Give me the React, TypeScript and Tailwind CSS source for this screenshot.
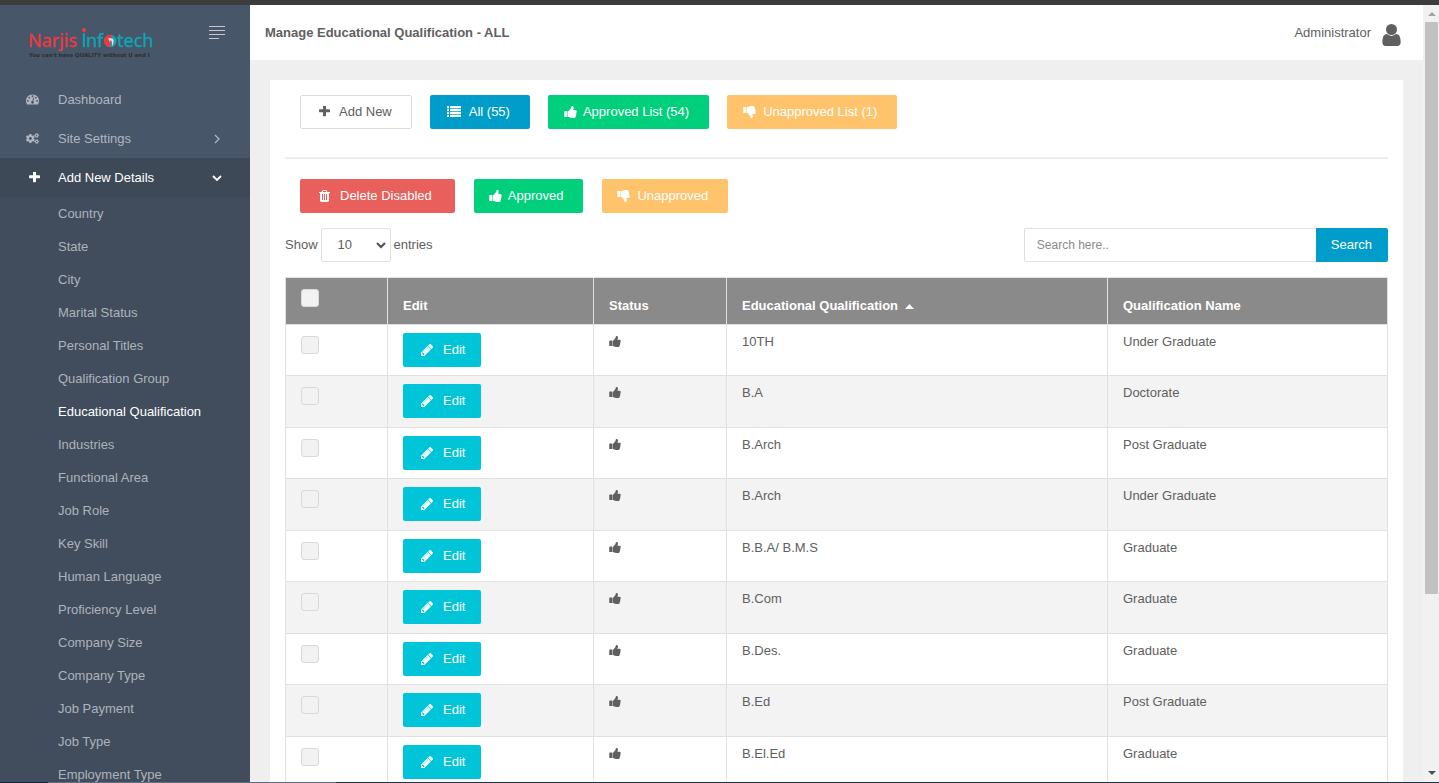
import type { ReactNode } from "react";
import { FaCogs } from "react-icons/fa";

type GlyphProps = { w: number; top: number; h: number; d: string; className?: string; flip?: boolean };

function Glyph({ w, top, h, d, className, flip }: GlyphProps) {
  return (
    <svg aria-hidden="true" viewBox={`0 ${flip ? top - h : -top} ${w} ${h}`} className={className} fill="currentColor">
      <path d={d} transform={flip ? undefined : "scale(1,-1)"} />
    </svg>
  );
}

const THUMB =
  "M256 320q0 -26 -19 -45t-45 -19q-27 0 -45.5 19t-18.5 45q0 27 18.5 45.5t45.5 18.5q26 0 45 -18.5t19 -45.5zM416 704v-640q0 -26 -19 -45t-45 -19h-288q-26 0 -45 19t-19 45v640q0 26 19 45t45 19h288q26 0 45 -19t19 -45zM1600 704q0 -86 -55 -149q15 -44 15 -76q3 -76 -43 -137q17 -56 0 -117q-15 -57 -54 -94q9 -112 -49 -181q-64 -76 -197 -78h-36h-76h-17q-66 0 -144 15.5t-121.5 29t-120.5 39.5q-123 43 -158 44q-26 1 -45 19.5t-19 44.5v641q0 25 18 43.5t43 20.5q24 2 76 59t101 121q68 87 101 120q18 18 31 48t17.5 48.5t13.5 60.5q7 39 12.5 61t19.5 52t34 50q19 19 45 19q46 0 82.5 -10.5t60 -26t40 -40.5t24 -45t12 -50t5 -45t0.5 -39q0 -38 -9.5 -76t-19 -60t-27.5 -56q-3 -6 -10 -18t-11 -22t-8 -24h277q78 0 135 -57t57 -135z";
const PLUS =
  "M1408 800v-192q0 -40 -28 -68t-68 -28h-416v-416q0 -40 -28 -68t-68 -28h-192q-40 0 -68 28t-28 68v416h-416q-40 0 -68 28t-28 68v192q0 40 28 68t68 28h416v416q0 40 28 68t68 28h192q40 0 68 -28t28 -68v-416h416q40 0 68 -28t28 -68z";
const USER =
  "M1280 137q0 -109 -62.5 -187t-150.5 -78h-854q-88 0 -150.5 78t-62.5 187q0 85 8.5 160.5t31.5 152t58.5 131t94 89t134.5 34.5q131 -128 313 -128t313 128q76 0 134.5 -34.5t94 -89t58.5 -131t31.5 -152t8.5 -160.5zM1024 1024q0 -159 -112.5 -271.5t-271.5 -112.5t-271.5 112.5t-112.5 271.5t112.5 271.5t271.5 112.5t271.5 -112.5t112.5 -271.5z";
const PENCIL =
  "M363 0l91 91l-235 235l-91 -91v-107h128v-128h107zM886 928q0 22 -22 22q-10 0 -17 -7l-542 -542q-7 -7 -7 -17q0 -22 22 -22q10 0 17 7l542 542q7 7 7 17zM832 1120l416 -416l-832 -832h-416v416zM1515 1024q0 -53 -37 -90l-166 -166l-416 416l166 165q36 38 90 38q53 0 91 -38l235 -234q37 -39 37 -91z";
const TRASH =
  "M512 160v704q0 14 -9 23t-23 9h-64q-14 0 -23 -9t-9 -23v-704q0 -14 9 -23t23 -9h64q14 0 23 9t9 23zM768 160v704q0 14 -9 23t-23 9h-64q-14 0 -23 -9t-9 -23v-704q0 -14 9 -23t23 -9h64q14 0 23 9t9 23zM1024 160v704q0 14 -9 23t-23 9h-64q-14 0 -23 -9t-9 -23v-704q0 -14 9 -23t23 -9h64q14 0 23 9t9 23zM480 1152h448l-48 117q-7 9 -17 11h-317q-10 -2 -17 -11zM1408 1120v-64q0 -14 -9 -23t-23 -9h-96v-948q0 -83 -47 -143.5t-113 -60.5h-832q-66 0 -113 58.5t-47 141.5v952h-96q-14 0 -23 9t-9 23v64q0 14 9 23t23 9h309l70 167q15 37 54 63t79 26h320q40 0 79 -26t54 -63l70 -167h309q14 0 23 -9t9 -23z";
const GAUGE =
  "M384 384q0 53 -37.5 90.5t-90.5 37.5t-90.5 -37.5t-37.5 -90.5t37.5 -90.5t90.5 -37.5t90.5 37.5t37.5 90.5zM576 832q0 53 -37.5 90.5t-90.5 37.5t-90.5 -37.5t-37.5 -90.5t37.5 -90.5t90.5 -37.5t90.5 37.5t37.5 90.5zM1004 351l101 382q6 26 -7.5 48.5t-38.5 29.5t-48 -6.5t-30 -39.5l-101 -382q-60 -5 -107 -43.5t-63 -98.5q-20 -77 20 -146t117 -89t146 20t89 117q16 60 -6 117t-72 91zM1664 384q0 53 -37.5 90.5t-90.5 37.5t-90.5 -37.5t-37.5 -90.5t37.5 -90.5t90.5 -37.5t90.5 37.5t37.5 90.5zM1024 1024q0 53 -37.5 90.5t-90.5 37.5t-90.5 -37.5t-37.5 -90.5t37.5 -90.5t90.5 -37.5t90.5 37.5t37.5 90.5zM1472 832q0 53 -37.5 90.5t-90.5 37.5t-90.5 -37.5t-37.5 -90.5t37.5 -90.5t90.5 -37.5t90.5 37.5t37.5 90.5zM1792 384q0 -261 -141 -483q-19 -29 -54 -29h-1402q-35 0 -54 29q-141 221 -141 483q0 182 71 348t191 286t286 191t348 71t348 -71t286 -191t191 -286t71 -348z";

const PlusIcon = () => <Glyph w={1408} top={1312} h={1408} d={PLUS} className="size-[11px]" />;
const ThumbUp = ({ className }: { className: string }) => (
  <Glyph w={1600} top={1408} h={1536} d={THUMB} className={className} />
);
const ThumbDown = () => <Glyph w={1600} top={1408} h={1536} d={THUMB} flip className="h-3 w-[13px]" />;
const TrashIcon = () => <Glyph w={1408} top={1408} h={1536} d={TRASH} className="h-3 w-[11px]" />;
const PencilIcon = () => <Glyph w={1515} top={1387} h={1515} d={PENCIL} className="size-3" />;
const ListIcon = () => (
  <svg aria-hidden="true" viewBox="0 0 28 22" className="h-[11px] w-[14px]" fill="currentColor">
    {[0, 6, 12, 18].map((y) => (
      <g key={y}>
        <rect x="0" y={y} width="4" height="4.6" rx="0.5" />
        <rect x="6" y={y} width="22" height="4.6" rx="0.5" />
      </g>
    ))}
  </svg>
);

function ActionButton({ tone, icon, children }: { tone: string; icon: ReactNode; children: ReactNode }) {
  return (
    <button type="button" className={`flex h-[34px] items-center rounded-[2px] pb-px whitespace-nowrap ${tone}`}>
      {icon}
      <span>{children}</span>
    </button>
  );
}

function Logo() {
  return (
    <svg viewBox="0 0 130 34" className="h-[34px] w-[130px]" role="img" aria-label="Narjis Infotech">
      <g fontFamily="'Noto Sans', sans-serif" fontSize="18" strokeWidth="0.3">
        <text x="0" y="21" fill="#ee3a3f" stroke="#ee3a3f">Narjis</text>
        <g fill="#0da7b4" stroke="#0da7b4">
          <rect x="55" y="7.5" width="1.8" height="13.5" />
          <text x="58" y="21">nf</text>
          <text x="89" y="21">tech</text>
        </g>
      </g>
      <circle cx="56" cy="4" r="2" fill="#ee3a3f" />
      <circle cx="82.3" cy="15" r="6.2" fill="#0da7b4" />
      <path d="M84 9.1a6.2 6.2 0 1 0 -1.8 12.1z" fill="#ee3a3f" />
      <path d="M79.8 12.2h3.2q2.6 0 2.6 2.8q0 3.2-1.6 5.6q.3-3.4-.2-5.2q-.3-1.2-1.4-1.2l-.4 2.2l-1-2.6z" fill="#f3dfe2" />
      <text x="1" y="31" fontFamily="'DejaVu Sans', sans-serif" fontWeight="bold" fontSize="5.4" fill="#2b2f38">
        You can't have QUALITY without U and I
      </text>
    </svg>
  );
}

const SUBMENU = [
  "Country", "State", "City", "Marital Status", "Personal Titles", "Qualification Group",
  "Educational Qualification", "Industries", "Functional Area", "Job Role", "Key Skill",
  "Human Language", "Proficiency Level", "Company Size", "Company Type", "Job Payment",
  "Job Type", "Employment Type",
];

const ROWS = [
  ["10TH", "Under Graduate"],
  ["B.A", "Doctorate"],
  ["B.Arch", "Post Graduate"],
  ["B.Arch", "Under Graduate"],
  ["B.B.A/ B.M.S", "Graduate"],
  ["B.Com", "Graduate"],
  ["B.Des.", "Graduate"],
  ["B.Ed", "Post Graduate"],
  ["B.El.Ed", "Graduate"],
];

function NavItem({ icon, label, arrow, active }: { icon: ReactNode; label: string; arrow?: string; active?: boolean }) {
  return (
    <a
      href="#"
      className={`flex h-[39px] items-center pr-7 pl-[26px] ${active ? "bg-[#3e4958] text-white" : "text-[#b1b6be]"}`}
    >
      <span className="flex w-8 items-center">{icon}</span>
      <span className="grow">{label}</span>
      {arrow && (
        <svg aria-hidden="true" viewBox="0 0 10 10" className="size-[10px]" fill="none" stroke="currentColor" strokeWidth={active ? 1.8 : 1.3}>
          <path d={arrow} />
        </svg>
      )}
    </a>
  );
}

function Sidebar() {
  return (
    <aside className="w-[250px] shrink-0 overflow-hidden bg-[#475669]">
      <div className="flex h-[75px] items-start justify-between pt-[21px] pr-[25px] pl-[28px]">
        <Logo />
        <button type="button" aria-label="Toggle menu" className="text-[#c4c8ce]">
          <svg viewBox="0 0 16 14" className="h-[14px] w-4" fill="currentColor">
            <path d="M0 0h16v1H0zM0 4h16v1H0zM0 8h16v1H0zM0 12h10v1H0z" />
          </svg>
        </button>
      </div>
      <nav>
        <NavItem
          icon={<Glyph w={1792} top={1280} h={1408} d={GAUGE} className="h-[11px] w-[13px]" />}
          label="Dashboard"
        />
        <NavItem icon={<FaCogs className="size-[13px]" />} label="Site Settings" arrow="M3 1l4 4l-4 4" />
        <NavItem
          icon={<span className="pl-[3px]"><PlusIcon /></span>}
          label="Add New Details"
          arrow="M1 3l4 4l4 -4"
          active
        />
        <ul className="bg-[#414d5d]">
          {SUBMENU.map((item) => (
            <li key={item}>
              <a
                href="#"
                className={`flex h-[33px] items-center pl-[58px] ${item === "Educational Qualification" ? "text-white" : "text-[#aeb3bb]"}`}
              >
                {item}
              </a>
            </li>
          ))}
        </ul>
      </nav>
    </aside>
  );
}

const CHECKBOX = "block size-[18px] appearance-none rounded-[3px] border border-[#d9d9d9] bg-[#f2f2f2]";
const CELL = "border border-[#e1e1e1] px-[15px] align-top";

function DataTable() {
  return (
    <table className="mt-[15px] w-full table-fixed border-collapse text-left leading-[18px]">
      <colgroup>
        <col className="w-[102px]" />
        <col className="w-[206px]" />
        <col className="w-[133px]" />
        <col className="w-[381px]" />
        <col />
      </colgroup>
      <thead>
        <tr className="h-[47px] bg-[#8a8a8a] text-white">
          <th className={`${CELL} pt-[11px]`}>
            <input type="checkbox" aria-label="Select all" className={CHECKBOX} />
          </th>
          <th className={`${CELL} pt-[19px]`}>Edit</th>
          <th className={`${CELL} pt-[19px]`}>Status</th>
          <th className={`${CELL} pt-[19px]`}>
            <span className="flex items-center gap-[7px]">
              Educational Qualification
              <svg aria-hidden="true" viewBox="0 0 9 5" className="h-[5px] w-[9px]" fill="currentColor">
                <path d="M4.5 0L9 5H0z" />
              </svg>
            </span>
          </th>
          <th className={`${CELL} pt-[19px]`}>Qualification Name</th>
        </tr>
      </thead>
      <tbody>
        {ROWS.map(([name, group], i) => (
          <tr key={i} className={i % 2 ? "h-[52px] bg-[#f3f3f3]" : "h-[51px] bg-white"}>
            <td className={`${CELL} pt-[11px]`}>
              <input type="checkbox" aria-label={`Select ${name}`} className={CHECKBOX} />
            </td>
            <td className={`${CELL} pt-2`}>
              <ActionButton tone="bg-[#00c5d9] text-white gap-[10px] pl-[18px] pr-4" icon={<PencilIcon />}>
                Edit
              </ActionButton>
            </td>
            <td className={`${CELL} pt-[11px]`}>
              <ThumbUp className="h-[11px] w-3" />
            </td>
            <td className={`${CELL} pt-2`}>{name}</td>
            <td className={`${CELL} pt-2`}>{group}</td>
          </tr>
        ))}
      </tbody>
    </table>
  );
}

function Scrollbar() {
  return (
    <div aria-hidden="true" className="flex w-4 shrink-0 flex-col items-center bg-[#f1f1f1]">
      <svg viewBox="0 0 17 17" className="size-[17px] shrink-0">
        <path d="M5 11l4 -4l4 4z" fill="#a3a3a3" />
      </svg>
      <div className="w-[13px] grow-[10] bg-[#c1c1c1]" />
      <div className="grow-[3]" />
      <svg viewBox="0 0 17 17" className="size-[17px] shrink-0">
        <path d="M5 6l4 4l4 -4z" fill="#505050" />
      </svg>
    </div>
  );
}

export default function App() {
  return (
    <div className="flex h-screen flex-col overflow-hidden bg-[#efefef] font-['Liberation_Sans',Arial,sans-serif] text-[13px] text-[#606060]">
      <div className="h-[5px] shrink-0 bg-[#3c3c3c]" />
      <div className="flex min-h-0 grow">
        <Sidebar />
        <div className="flex min-w-0 grow flex-col overflow-hidden">
          <header className="flex h-[55px] shrink-0 items-center justify-between bg-white pr-[22px] pl-[15px]">
            <h1 className="font-bold">Manage Educational Qualification - ALL</h1>
            <a href="#" className="flex items-center gap-[11px]">
              Administrator
              <span className="pt-1">
                <Glyph w={1280} top={1408} h={1536} d={USER} className="h-[22px] w-[19px]" />
              </span>
            </a>
          </header>
          <main className="mx-5 mt-5 grow bg-white p-[15px]">
            <div className="flex gap-[18px] pl-[15px]">
              <ActionButton tone="border border-[#dcdcdc] bg-white gap-[9px] pl-[18px] pr-[19px]" icon={<PlusIcon />}>
                Add New
              </ActionButton>
              <ActionButton tone="bg-[#009dca] text-white gap-2 pl-[17px] pr-5" icon={<ListIcon />}>
                All (55)
              </ActionButton>
              <ActionButton tone="bg-[#00d07c] text-white gap-[6px] pl-4 pr-5" icon={<ThumbUp className="h-3 w-[13px]" />}>
                Approved List (54)
              </ActionButton>
              <ActionButton tone="bg-[#ffc36b] text-white gap-[7px] pl-4 pr-5" icon={<ThumbDown />}>
                Unapproved List (1)
              </ActionButton>
            </div>
            <hr className="mt-7 mb-5 border-t-2 border-[#eeeeee]" />
            <div className="flex gap-[19px] pl-[15px]">
              <ActionButton tone="bg-[#e85f5c] text-white gap-[10px] pl-[19px] pr-[23px]" icon={<TrashIcon />}>
                Delete Disabled
              </ActionButton>
              <ActionButton tone="bg-[#00d07c] text-white gap-[6px] pl-[15px] pr-5" icon={<ThumbUp className="h-3 w-[13px]" />}>
                Approved
              </ActionButton>
              <ActionButton tone="bg-[#ffc36b] text-white gap-[7px] pl-[15px] pr-5" icon={<ThumbDown />}>
                Unapproved
              </ActionButton>
            </div>
            <div className="mt-[15px] flex items-center justify-between">
              <label className="flex items-center gap-[3px]">
                Show
                <span className="relative">
                  <select className="block h-[34px] w-[70px] appearance-none rounded-[2px] border border-[#e0e0e0] bg-white pl-4" defaultValue="10">
                    <option>10</option>
                    <option>25</option>
                    <option>50</option>
                  </select>
                  <svg aria-hidden="true" viewBox="0 0 10 7" className="pointer-events-none absolute top-[14px] right-[5px] h-[7px] w-[10px]" fill="none" stroke="#505050" strokeWidth="2">
                    <path d="M1 1l4 4l4 -4" />
                  </svg>
                </span>
                entries
              </label>
              <form className="flex">
                <input
                  type="text"
                  aria-label="Search"
                  placeholder="Search here.."
                  className="h-[34px] w-[292px] rounded-l-[2px] border border-r-0 border-[#e0e0e0] bg-white pl-3 text-xs placeholder:text-[#8a8a8a]"
                />
                <button type="button" className="h-[34px] rounded-r-[2px] bg-[#009dca] pr-4 pb-px pl-[15px] text-white">
                  Search
                </button>
              </form>
            </div>
            <DataTable />
          </main>
        </div>
        <Scrollbar />
      </div>
      <div className="flex h-px shrink-0 bg-[#1f3349]">
        <div className="w-12 bg-[#0c2438]" />
        <div className="w-72 bg-[#5f6f80]" />
      </div>
    </div>
  );
}
